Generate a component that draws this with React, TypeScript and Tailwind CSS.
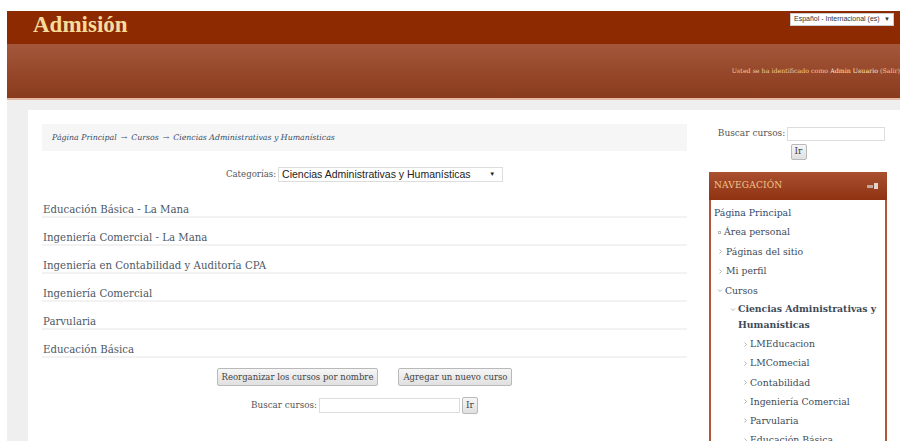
import React from 'react';

const courses = [
  'Educación Básica - La Mana',
  'Ingeniería Comercial - La Mana',
  'Ingeniería en Contabilidad y Auditoría CPA',
  'Ingeniería Comercial',
  'Parvularia',
  'Educación Básica',
];

const subCourses = [
  'LMEducacion',
  'LMComecial',
  'Contabilidad',
  'Ingeniería Comercial',
  'Parvularia',
  'Educación Básica',
];

const serif = "font-['DejaVu_Serif',serif]";
const sans = "font-['Liberation_Sans',Arial,sans-serif]";

// small tree markers for the navigation block
const Chevron = () => (
  <svg width="5" height="7" viewBox="0 0 5 7" className="shrink-0">
    <path d="M1.5 1.5 L3.5 3.5 L1.5 5.5" fill="none" stroke="#aaa" strokeWidth="0.9" />
  </svg>
);
const Caret = () => (
  <svg width="6" height="5" viewBox="0 0 6 5" className="shrink-0">
    <path d="M1 1.5 L3 3.5 L5 1.5" fill="none" stroke="#aaa" strokeWidth="0.9" />
  </svg>
);

const btn =
  'rounded-[2px] border border-[#b9b9b9] bg-gradient-to-b from-[#f6f6f6] to-[#e0e0e0] text-[#444]';

function NavBlock() {
  return (
    <div className="w-[178px]">
      <div className="flex h-[28px] items-center justify-between bg-gradient-to-b from-[#a9502f] to-[#8f3211] pl-[5px] pr-[9px]">
        <span className="text-[9px] tracking-[0.2px] text-[#f3c48c]">NAVEGACIÓN</span>
        <span className="flex items-center gap-[1px]">
          <span className="h-[3px] w-[6px] bg-[#c9a89c]" />
          <span className="h-[6px] w-[4px] bg-[#e3d3cc]" />
        </span>
      </div>
      <div className="h-[260px] border-2 border-t-0 border-[#b3533a] bg-white pl-[3px] pr-[3px] pt-[3px] text-[9.3px] text-[#3d4a57]">
        <div className="h-[19.5px] leading-[19.5px] text-[#2c4a6e]">Página Principal</div>
        <div className="flex h-[19.5px] items-center gap-[3px] pl-[4px]">
          <span className="h-[3px] w-[3px] border border-[#b9b9b9]" />
          <span>Área personal</span>
        </div>
        <div className="flex h-[19.5px] items-center gap-[3px] pl-[4px]">
          <Chevron />
          <span>Páginas del sitio</span>
        </div>
        <div className="flex h-[19.5px] items-center gap-[3px] pl-[4px]">
          <Chevron />
          <span>Mi perfil</span>
        </div>
        <div className="flex h-[19.5px] items-center gap-[2px] pl-[3px]">
          <Caret />
          <span>Cursos</span>
        </div>
        <div className="flex gap-[2px] pl-[16px]">
          <span className="pt-[6px]">
            <Caret />
          </span>
          <span className="text-[9.3px] font-bold leading-[16px]">Ciencias Administrativas y Humanísticas</span>
        </div>
        <div className="pl-[29px] pt-[2px]">
          {subCourses.map((c) => (
            <div key={c} className="flex h-[19.2px] items-center gap-[2px]">
              <Chevron />
              <span>{c}</span>
            </div>
          ))}
        </div>
      </div>
    </div>
  );
}

export default function App() {
  return (
    <div className={`h-[441px] w-[900px] overflow-hidden bg-white ${serif}`}>
      <div className="ml-[7px] mt-[11px]">
        {/* logo bar */}
        <div className="flex h-[33px] items-start justify-between bg-[#8e2a02]">
          <h1 className="ml-[26px] mt-[-3px] font-['Liberation_Serif',serif] text-[23px] font-bold text-[#f6dc9a]">
            Admisión
          </h1>
          <div className={`mr-[6px] mt-[2px] flex h-[13px] w-[104px] items-center justify-between whitespace-nowrap border border-[#ccc] bg-white px-[3px] text-[7px] text-[#333] ${sans}`}>
            <span>Español - Internacional (es)</span>
            <span className="text-[6px]">▼</span>
          </div>
        </div>
        {/* user bar */}
        <div className="flex h-[54px] items-center justify-end bg-gradient-to-b from-[#a5573b] to-[#893a1c]">
          <span className="text-[6.3px] text-[#f2c98f]">
            Usted se ha identificado como <span className="text-[#fbe8c8]">Admin Usuario</span> (Salir)
          </span>
        </div>
        <div className="h-[2px] bg-[#e6b8a6]" />
        {/* page */}
        <div className="bg-[#efefef] pl-[21px] pt-[10px]">
          <div className="flex h-[400px] bg-white">
            <div className="w-[669px] pl-[14px] pr-[10px] pt-[14px]">
              <div className="flex h-[27px] items-center bg-[#f6f6f6] pl-[10px] text-[7.8px] italic text-[#3a4d63]">
                Página Principal <span className="mx-[4px] not-italic">→</span> Cursos
                <span className="mx-[4px] not-italic">→</span> Ciencias Administrativas y Humanísticas
              </div>
              <div className="mt-[16px] flex items-center justify-center gap-[2px]">
                <span className="text-[8.6px] text-[#555]">Categorías:</span>
                <div className={`flex h-[15px] w-[225px] items-center justify-between border border-[#ddd] bg-white px-[3px] text-[10.5px] text-[#222] ${sans}`}>
                  <span>Ciencias Administrativas y Humanísticas</span>
                  <span className="mr-[4px] text-[6px]">▼</span>
                </div>
              </div>
              <div className="mt-[8px]">
                {courses.map((c) => (
                  <div key={c} className="h-[28px] border-b-2 border-[#f2f2f2] pl-[1px] pt-[12px] text-[10.2px] leading-[16px] text-[#4b5866]">
                    {c}
                  </div>
                ))}
              </div>
              <div className="mt-[10px] flex justify-center gap-[20px] text-[8.5px]">
                <button className={`h-[18px] px-[4px] ${btn}`}>Reorganizar los cursos por nombre</button>
                <button className={`h-[18px] px-[4px] ${btn}`}>Agregar un nuevo curso</button>
              </div>
              <div className="mt-[11px] flex items-center justify-center gap-[2px] text-[8.8px] text-[#555]">
                <span>Buscar cursos:</span>
                <span className="h-[15px] w-[141px] border border-[#ddd] bg-white" />
                <button className={`h-[17px] w-[16px] text-[9px] ${btn}`}>Ir</button>
              </div>
            </div>
            <div className="flex flex-1 flex-col items-center pt-[17px]">
              <div className="flex items-center gap-[2px] pl-[6px] text-[9px] text-[#555]">
                <span>Buscar cursos:</span>
                <span className="h-[14px] w-[98px] border border-[#ddd] bg-white" />
              </div>
              <button className={`mt-[3px] h-[16px] w-[16px] text-[9px] ${btn}`}>Ir</button>
              <div className="mt-[12px] self-start pl-[12px]">
                <NavBlock />
              </div>
            </div>
          </div>
        </div>
      </div>
    </div>
  );
}
